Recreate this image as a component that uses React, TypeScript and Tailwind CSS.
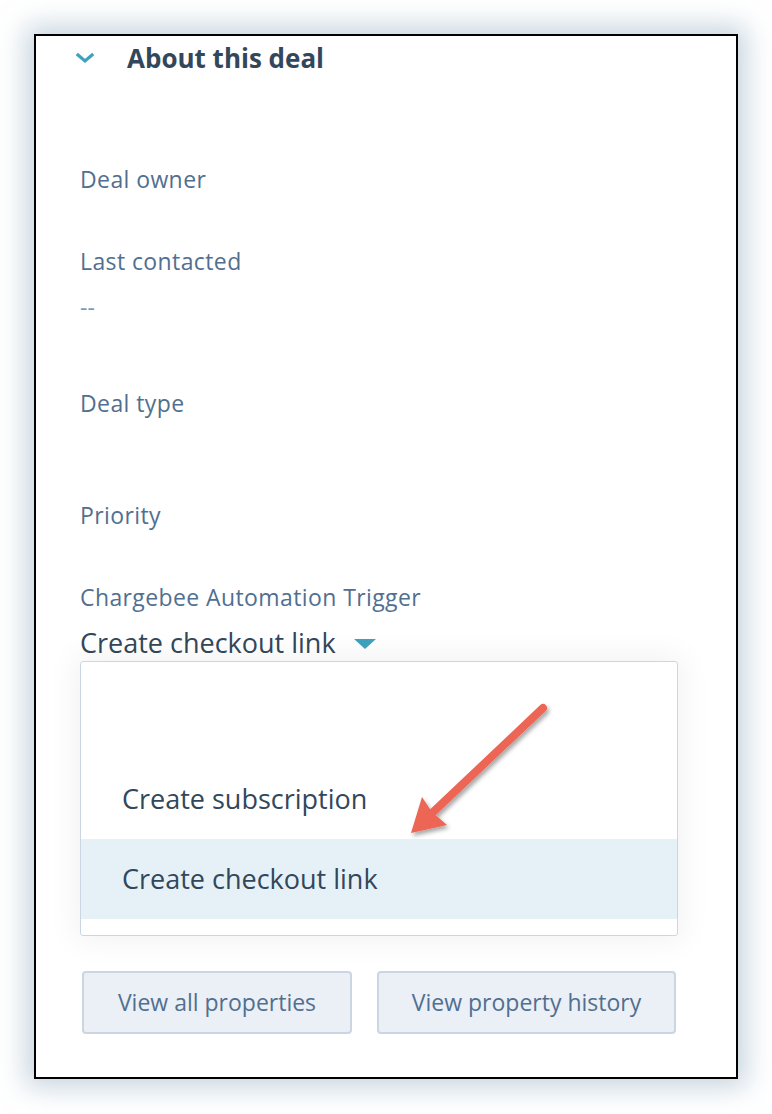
import { ReactNode } from "react"

const font = { fontFamily: "'Open Sans', Lato, sans-serif" }

function Field({ label, value, className }: { label: string; value?: ReactNode; className?: string }) {
  return (
    <div className={className}>
      <div className="text-[23px] leading-[30px] tracking-[0.4px] text-[#516f90]">{label}</div>
      {value}
    </div>
  )
}

function Chevron() {
  return (
    <svg width="20" height="12" viewBox="0 0 20 12" className="mr-[32px]">
      <path d="M3 3 L10 9 L17 3" fill="none" stroke="#3fa2bd" strokeWidth="3.2" strokeLinecap="square" />
    </svg>
  )
}

// red annotation arrow, drawn in page coordinates
function Pointer() {
  return (
    <svg className="pointer-events-none absolute left-[334px] top-[654px]" width="200" height="160" viewBox="370 690 200 160">
      <defs>
        <filter id="drop" x="-20%" y="-20%" width="140%" height="140%">
          <feDropShadow dx="2" dy="3" stdDeviation="2" floodColor="#000" floodOpacity="0.35" />
        </filter>
      </defs>
      <g filter="url(#drop)">
        <line x1="543" y1="708" x2="430" y2="815" stroke="#ec6555" strokeWidth="8" strokeLinecap="round" />
        <path d="M411 833 L422 797 L432 812 L447 825 Z" fill="#ec6555" />
      </g>
    </svg>
  )
}

export default function App() {
  return (
    <div className="min-h-[1114px] w-[772px] bg-white p-[34px]" style={font}>
      <div className="relative h-[1045px] w-[704px] border-2 border-black bg-white shadow-[0_0_26px_8px_rgba(160,184,202,0.6)]">
        <div className="flex h-[44px] items-center pl-[39px]">
          <Chevron />
          <h2 className="text-[26px] font-bold text-[#33475b]">About this deal</h2>
        </div>

        <div className="flex flex-col pl-[44px]">
          <Field label="Deal owner" className="mt-[84px]" />
          <Field
            label="Last contacted"
            className="mt-[52px]"
            value={<div className="mt-[16px] text-[23px] leading-[30px] text-[#7c98b6]">--</div>}
          />
          <Field label="Deal type" className="mt-[66px]" />
          <Field label="Priority" className="mt-[82px]" />
          <Field
            label="Chargebee Automation Trigger"
            className="mt-[52px]"
            value={
              <div className="mt-[14px] flex h-[34px] items-center text-[27px] text-[#33475b]">
                Create checkout link
                <span className="ml-[18px] mt-[2px] h-0 w-0 border-x-[11px] border-t-[10px] border-x-transparent border-t-[#3fa2bd]" />
              </div>
            }
          />

          <div className="mt-[1px] flex h-[275px] w-[598px] flex-col rounded-[3px] border border-[#cbd6e2] bg-white pt-[97px] shadow-[0_0_30px_6px_rgba(0,0,0,0.05)]">
            <div className="flex h-[80px] items-center pl-[41px] text-[27px] text-[#33475b]">Create subscription</div>
            <div className="flex h-[80px] items-center bg-[#e5f1f7] pl-[41px] text-[27px] text-[#33475b]">Create checkout link</div>
          </div>

          <div className="mt-[35px] flex gap-[25px] pl-[2px]">
            <button className="h-[63px] w-[270px] rounded-[4px] border-2 border-[#cbd6e2] bg-[#eaf0f6] text-[23px] text-[#516f90]">
              View all properties
            </button>
            <button className="h-[63px] w-[299px] rounded-[4px] border-2 border-[#cbd6e2] bg-[#eaf0f6] text-[23px] text-[#516f90]">
              View property history
            </button>
          </div>
        </div>

        <Pointer />
      </div>
    </div>
  )
}
